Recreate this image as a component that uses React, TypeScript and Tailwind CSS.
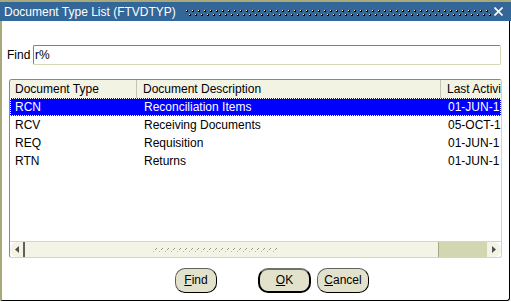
import React from "react";

const rows = [
    { type: "RCN", desc: "Reconciliation Items", date: "01-JUN-1" },
    { type: "RCV", desc: "Receiving Documents", date: "05-OCT-1" },
    { type: "REQ", desc: "Requisition", date: "01-JUN-1" },
    { type: "RTN", desc: "Returns", date: "01-JUN-1" },
];

const TitleDots = () => (
    <svg className="h-full w-full" xmlns="http://www.w3.org/2000/svg">
        <defs>
            <pattern id="dots" width="6" height="19" patternUnits="userSpaceOnUse">
                <rect x="0" y="8" width="1" height="1" fill="#f4f0c8" />
                <rect x="1" y="8" width="1" height="2" fill="#000" />
                <rect x="0" y="9" width="1" height="1" fill="#000" />
                <rect x="3" y="12" width="1" height="1" fill="#f4f0c8" />
                <rect x="4" y="12" width="1" height="2" fill="#000" />
                <rect x="3" y="13" width="1" height="1" fill="#000" />
            </pattern>
        </defs>
        <rect width="100%" height="100%" fill="url(#dots)" />
    </svg>
);

const Grip = () => (
    <svg width="124" height="6" xmlns="http://www.w3.org/2000/svg">
        <defs>
            <pattern id="grip" width="6" height="6" patternUnits="userSpaceOnUse">
                <rect x="3" y="1" width="1" height="1" fill="#9a9a80" />
                <rect x="2" y="2" width="1" height="1" fill="#9a9a80" />
                <rect x="0" y="4" width="1" height="1" fill="#c0c0a8" />
            </pattern>
        </defs>
        <rect width="124" height="6" fill="url(#grip)" />
    </svg>
);

const Btn = ({ label, rest, def }: { label: string; rest: string; def?: boolean }) => (
    <button
        className={
            def
                ? "w-full h-[25px] p-0 rounded-[10px] border-2 border-black border-t-[#707070] bg-[#e2e2cc] text-[12px] text-black"
                : "w-full h-[25px] p-0 rounded-[10px] border border-[#606060] border-r-black border-b-black bg-[#e2e2cc] text-[12px] text-black"
        }
    >
        <span className="underline">{label}</span>
        {rest}
    </button>
);

export default function App() {
    return (
        <div
            className="w-[511px] h-[302px] bg-white flex flex-col overflow-hidden"
            style={{ fontFamily: '"Liberation Sans", Arial, sans-serif' }}
        >
            {/* title bar */}
            <div className="h-[21px] border-t-2 border-[#a8a878] bg-[#336699] flex items-center pl-[4px] pr-[8px]">
                <span className="text-white text-[12px] whitespace-nowrap leading-none">
                    Document Type List (FTVDTYP)
                </span>
                <div className="flex-1 h-full ml-[10px] mr-[3px]">
                    <TitleDots />
                </div>
                <svg width="9" height="9" viewBox="0 0 9 9">
                    <path d="M0.5 0.5 L8.5 8.5 M8.5 0.5 L0.5 8.5" stroke="#fff" strokeWidth="1.6" />
                </svg>
            </div>

            {/* body */}
            <div className="flex-1 flex flex-col border-l-2 border-[#a8a878] border-r border-r-black border-b border-b-black mr-[1px] mb-[1px] rounded-br-[3px] pl-[5px]">
                <div className="flex items-center mt-[24px] h-[20px]">
                    <span className="text-[12px] w-[26px]">Find</span>
                    <div className="w-[468px] h-[20px] border border-t-[#808080] border-l-[#808080] border-r-[#d6d6b4] border-b-[#d6d6b4] rounded-[2px] flex items-center text-[12px] pl-[1px]">
                        r%
                    </div>
                </div>

                {/* table */}
                <div className="ml-[2px] mt-[14px] w-[493px] h-[179px] border border-t-[#888888] border-l-[#888888] border-r-[#d6d6b4] border-b-[#d6d6b4] rounded-[3px] flex flex-col overflow-hidden text-[12px]">
                    <div className="flex h-[18px] bg-[#f3f3e4] items-center shrink-0">
                        <div className="w-[127px] pl-[5px] border-r border-[#c4c4b0] h-full flex items-center">Document Type</div>
                        <div className="w-[304px] pl-[6px] border-r border-[#c4c4b0] h-full flex items-center">Document Description</div>
                        <div className="flex-1 pl-[6px] whitespace-nowrap overflow-hidden h-full flex items-center">Last Activity</div>
                    </div>
                    {rows.map((r, i) => (
                        <div
                            key={r.type}
                            className={
                                i === 0
                                    ? "flex h-[18px] items-center shrink-0 bg-[#0000ff] text-white outline-1 outline-dotted outline-white -outline-offset-1"
                                    : "flex h-[18px] items-center shrink-0"
                            }
                        >
                            <div className="w-[127px] pl-[5px]">{r.type}</div>
                            <div className="w-[304px] pl-[7px]">{r.desc}</div>
                            <div className="flex-1 pl-[7px] whitespace-nowrap overflow-hidden">{r.date}</div>
                        </div>
                    ))}
                    <div className="flex-1" />
                    {/* scrollbar */}
                    <div className="h-[16px] flex shrink-0 border-t border-[#d8d8b8]">
                        <div className="w-[15px] bg-[#f4f4e6] rounded-l-[7px] border-r-2 border-[#606060] flex items-center justify-center">
                            <svg width="4" height="7" viewBox="0 0 4 7">
                                <path d="M4 0 L0 3.5 L4 7 Z" fill="#505050" />
                            </svg>
                        </div>
                        <div className="w-[414px] bg-[#f4f4e6] border-r border-[#a8a888] flex items-center pl-[128px]">
                            <Grip />
                        </div>
                        <div className="flex-1 bg-[#d3d7b1]" />
                        <div className="w-[14px] bg-[#f4f4e6] rounded-r-[7px] flex items-center justify-center">
                            <svg width="4" height="7" viewBox="0 0 4 7">
                                <path d="M0 0 L4 3.5 L0 7 Z" fill="#505050" />
                            </svg>
                        </div>
                    </div>
                </div>

                {/* buttons */}
                <div className="flex mt-[9px] pl-[168px]">
                    <div className="w-[42px]">
                        <Btn label="F" rest="ind" />
                    </div>
                    <div className="ml-[41px] w-[53px]">
                        <Btn label="O" rest="K" def />
                    </div>
                    <div className="ml-[6px] w-[52px]">
                        <Btn label="C" rest="ancel" />
                    </div>
                </div>
            </div>
        </div>
    );
}
